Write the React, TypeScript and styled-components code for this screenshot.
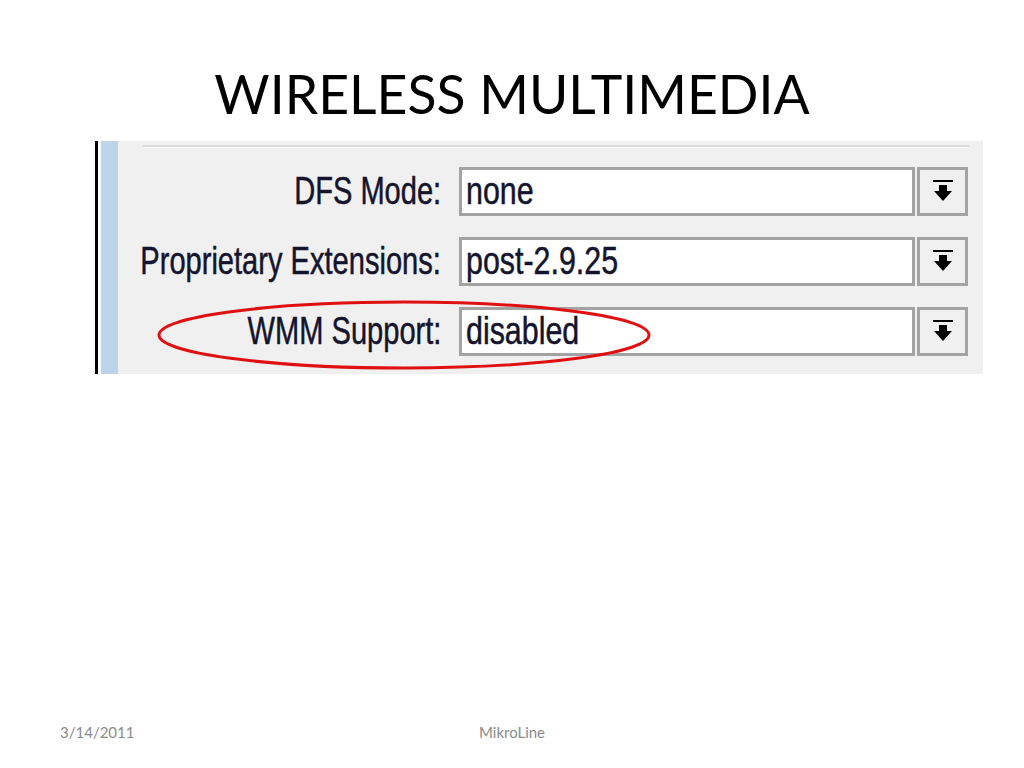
import React from 'react';
import styled, { createGlobalStyle } from 'styled-components';

const GlobalStyle = createGlobalStyle`
  html, body {
    margin: 0;
    padding: 0;
    background: #ffffff;
  }
`;

const Slide = styled.div`
  width: 1024px;
  height: 768px;
  display: flex;
  flex-direction: column;
  overflow: hidden;
`;

const Title = styled.h1`
  margin: 0;
  padding-top: 60px;
  height: 81px;
  text-align: center;
  font-family: Lato, 'Open Sans', sans-serif;
  font-weight: 400;
  font-size: 53.5px;
  line-height: 66px;
  color: #000;
`;

const Shot = styled.div`
  position: relative;
  margin-left: 95px;
  width: 888px;
  height: 233px;
  display: flex;
`;

const EdgeBar = styled.div`
  flex: 0 0 3px;
  background: #000;
  margin-right: 3px;
`;

const BlueStrip = styled.div`
  flex: 0 0 17px;
  background: #bcd3ea;
`;

const Panel = styled.div`
  flex: 1;
  min-width: 0;
  background: #f0f0f0;
  padding: 4px 15px 18px 0;
  display: flex;
  flex-direction: column;
`;

const Separator = styled.div`
  margin-left: 25px;
  margin-right: -1px;
  height: 2px;
  background: #dadada;
  border-bottom: 1px solid #fafafa;
  margin-bottom: 19px;
`;

const Rows = styled.div`
  display: grid;
  grid-template-columns: minmax(0, 1fr) 456px 51px;
  grid-auto-rows: 49px;
  row-gap: 21px;
  column-gap: 2px;
`;

const Label = styled.div`
  min-width: 0;
  display: flex;
  align-items: center;
  justify-content: flex-end;
  padding-right: 16px;
  white-space: nowrap;
`;

const LabelText = styled.span`
  display: inline-block;
  flex-shrink: 0;
  font-family: 'Liberation Sans', Arial, sans-serif;
  font-size: 38px;
  color: #14142e;
  -webkit-text-stroke: 0.5px #14142e;
  transform: scaleX(0.765);
  transform-origin: right center;
`;

const Field = styled.div`
  box-sizing: border-box;
  background: #fff;
  border: 3px solid #a3a3a3;
  display: flex;
  align-items: center;
  padding-left: 4px;
  overflow: hidden;
`;

const FieldText = styled.span`
  display: inline-block;
  font-family: 'Liberation Sans', Arial, sans-serif;
  font-size: 38px;
  color: #14142e;
  -webkit-text-stroke: 0.5px #14142e;
  transform: scaleX(0.8);
  transform-origin: left center;
  white-space: nowrap;
`;

const DropButton = styled.div`
  box-sizing: border-box;
  background: #f0f0f0;
  border: 3px solid #a3a3a3;
  display: flex;
  align-items: center;
  justify-content: center;
`;

const Ellipse = styled.svg`
  position: absolute;
  left: 0;
  top: 0;
  overflow: visible;
  pointer-events: none;
`;

const Footer = styled.div`
  margin-top: auto;
  height: 45px;
  display: grid;
  grid-template-columns: 1fr auto 1fr;
  align-items: start;
  padding: 0 60px;
  font-family: Lato, 'Open Sans', sans-serif;
  font-size: 15px;
  color: #8b8b8b;
`;

const FooterRight = styled.span`
  text-align: right;
`;

const DropIcon = () => (
  <svg width="22" height="24" viewBox="0 0 22 24">
    <rect x="1" y="0" width="20" height="2" fill="#000" />
    <rect x="7" y="5" width="8" height="7" fill="#000" />
    <polygon points="2,11 20,11 11,21" fill="#000" />
  </svg>
);

const rows = [
  { label: 'DFS Mode:', value: 'none' },
  { label: 'Proprietary Extensions:', value: 'post-2.9.25' },
  { label: 'WMM Support:', value: 'disabled' },
];

export default function App() {
  return (
    <>
      <GlobalStyle />
      <Slide>
        <Title>WIRELESS MULTIMEDIA</Title>
        <Shot>
          <EdgeBar />
          <BlueStrip />
          <Panel>
            <Separator />
            <Rows>
              {rows.map((r) => (
                <React.Fragment key={r.label}>
                  <Label>
                    <LabelText>{r.label}</LabelText>
                  </Label>
                  <Field>
                    <FieldText>{r.value}</FieldText>
                  </Field>
                  <DropButton>
                    <DropIcon />
                  </DropButton>
                </React.Fragment>
              ))}
            </Rows>
          </Panel>
          <Ellipse width="888" height="233">
            <ellipse cx="309" cy="194" rx="245" ry="33" fill="none" stroke="#e01010" strokeWidth="3" />
          </Ellipse>
        </Shot>
        <Footer>
          <span>3/14/2011</span>
          <span>MikroLine</span>
          <FooterRight />
        </Footer>
      </Slide>
    </>
  );
}
